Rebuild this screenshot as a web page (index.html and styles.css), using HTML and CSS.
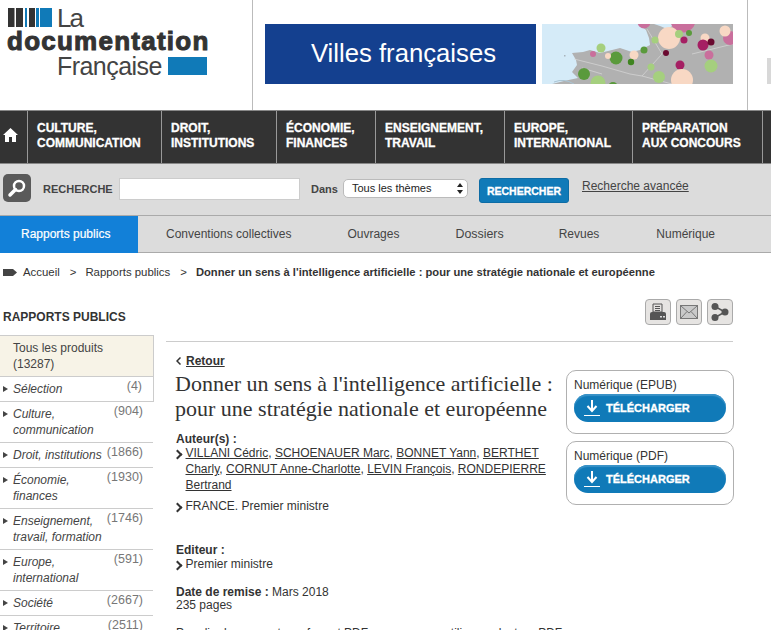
FILE: index.html
```html
<!DOCTYPE html>
<html lang="fr">
<head>
<meta charset="utf-8">
<title>Donner un sens à l'intelligence artificielle</title>
<link rel="stylesheet" href="styles.css">
</head>
<body>
<header class="top">
  <div class="logo">
    <div class="logo-row1">
      <svg class="logo-bars" width="44" height="19" viewBox="0 0 44 19"><rect x="0" width="6.500" height="19" fill="#333"/><rect x="8" width="7" height="19" fill="#333"/><rect x="17" width="2" height="19" fill="#107ab8"/><rect x="21" width="6" height="19" fill="#333"/><rect x="28" width="3" height="19" fill="#107ab8"/><rect x="32" width="12" height="19" fill="#107ab8"/></svg>
      <span class="logo-la">La</span>
    </div>
    <div class="logo-doc">documentation</div>
    <div class="logo-row3"><span class="logo-fr">Française</span><span class="logo-box"></span></div>
  </div>
  <div class="banner">
    <div class="banner-title">Villes françaises</div>
    <svg class="banner-map" width="191" height="60" viewBox="0 0 191 60">
      <rect width="191" height="60" fill="#d5ebf8"/>
      <path d="M97 0 L104 6 L107 14 L108 21 L98 26 L90 28 L78 24 L66 27 L58 29 L48 26 L41 28 L30 29 L34 36 L35 41 L30 48 L36 54 L22 57 L10 60 L191 60 L191 0 L134 0 L125 5 L118 2 L112 0Z" fill="#b1b1b1"/>
      <path d="M32 35 L60 42 L88 50 L100 52 L120 30 M100 52 L130 60 M40 44 L60 50 M150 30 L191 20 M105 5 L120 30" fill="none" stroke="#d8d8d8" stroke-width=".7"/>
      <path d="M12 58 Q22 54 32 60" fill="none" stroke="#a9c4d4"/>
      <rect x="22" y="31" width="1.500" height="1.500" fill="#a8b4bc"/>
      <circle cx="102" cy="-2" r="6.500" fill="#c96f9c"/>
      <circle cx="141" cy="-4" r="12.500" fill="#c96f9c"/>
      <circle cx="188" cy="14" r="7" fill="#c96f9c"/>
      <circle cx="127" cy="14" r="11" fill="#f8d8c4"/>
      <circle cx="137" cy="10" r="4" fill="#a5cf7e"/>
      <circle cx="147" cy="9" r="3" fill="#5a9a3c"/>
      <circle cx="142" cy="16" r="3.500" fill="#a51f63"/>
      <circle cx="113" cy="16" r="3.500" fill="#a5cf7e"/>
      <circle cx="163" cy="14" r="4.500" fill="#f8d8c4"/>
      <circle cx="183" cy="7" r="5.500" fill="#f8d8c4"/>
      <circle cx="161" cy="21" r="5.500" fill="#a51f63"/>
      <circle cx="169" cy="18" r="3.500" fill="#6a0a30"/>
      <circle cx="167" cy="31" r="4.500" fill="#c96f9c"/>
      <circle cx="169" cy="42" r="6.500" fill="#a5cf7e"/>
      <circle cx="124" cy="29" r="3" fill="#6a0a30"/>
      <circle cx="138" cy="41" r="4.500" fill="#a51f63"/>
      <circle cx="140" cy="56" r="11" fill="#f8d8c4"/>
      <circle cx="109" cy="43" r="3.500" fill="#a5cf7e"/>
      <circle cx="117" cy="53" r="6" fill="#a5cf7e"/>
      <circle cx="102" cy="26" r="3.500" fill="#5a9a3c"/>
      <circle cx="92" cy="31" r="4.500" fill="#f8d8c4"/>
      <circle cx="89" cy="38" r="3.200" fill="#3f8420"/>
      <circle cx="74" cy="34" r="6.500" fill="#5a9a3c"/>
      <circle cx="66" cy="32" r="3" fill="#f8d8c4"/>
      <circle cx="59" cy="24" r="4.500" fill="#a5cf7e"/>
      <circle cx="51" cy="30" r="3" fill="#c96f9c"/>
      <circle cx="42" cy="50" r="6" fill="#5a9a3c"/>
      <circle cx="56" cy="59" r="7.500" fill="#a5cf7e"/>
      <circle cx="71" cy="63" r="5" fill="#5a9a3c"/>
    </svg>
  </div>
  <div class="sliver"></div>
</header>

<nav class="mainnav">
  <a class="nav-home"><svg width="15" height="14" viewBox="0 0 15 14"><path d="M7.500 0 L15 7 L13 7 L13 14 L9 14 L9 9 L6 9 L6 14 L2 14 L2 7 L0 7Z" fill="#fff"/></svg></a>
  <a class="nav-item w1">CULTURE,<br>COMMUNICATION</a>
  <a class="nav-item w2">DROIT,<br>INSTITUTIONS</a>
  <a class="nav-item w3">ÉCONOMIE,<br>FINANCES</a>
  <a class="nav-item w4">ENSEIGNEMENT,<br>TRAVAIL</a>
  <a class="nav-item w5">EUROPE,<br>INTERNATIONAL</a>
  <a class="nav-item w6">PRÉPARATION<br>AUX CONCOURS</a>
</nav>

<div class="searchbar">
  <span class="search-icon"><svg width="20" height="20" viewBox="0 0 20 20"><circle cx="12" cy="8" r="5" fill="none" stroke="#fff" stroke-width="2.500"/><path d="M8.500 11.500 L3 17" stroke="#fff" stroke-width="3.500" stroke-linecap="round"/></svg></span>
  <span class="search-label">RECHERCHE</span>
  <span class="search-input"></span>
  <span class="search-dans">Dans</span>
  <span class="search-select">Tous les thèmes<svg width="6" height="11" viewBox="0 0 6 11"><path d="M3 0 L6 4 L0 4Z M3 11 L0 7 L6 7Z" fill="#222"/></svg></span>
  <span class="search-btn">RECHERCHER</span>
  <a class="search-adv">Recherche avancée</a>
</div>

<nav class="tabs">
  <a class="tab tab-on">Rapports publics</a>
  <a class="tab t2">Conventions collectives</a>
  <a class="tab t3">Ouvrages</a>
  <a class="tab t4">Dossiers</a>
  <a class="tab t5">Revues</a>
  <a class="tab t6">Numérique</a>
</nav>

<div class="crumbs">
  <svg width="14" height="7" viewBox="0 0 14 7"><path d="M0 0 H10 L14 3.500 L10 7 H0Z" fill="#444"/></svg>
  <span>Accueil</span><span class="sep">&gt;</span><span>Rapports publics</span><span class="sep">&gt;</span><b>Donner un sens à l'intelligence artificielle : pour une stratégie nationale et européenne</b>
</div>

<div class="page">
  <aside class="side">
    <h2 class="side-title">RAPPORTS PUBLICS</h2>
    <div class="side-all">Tous les produits<br>(13287)</div>
    <div class="cat cat-first"><i>Sélection</i><span>(4)</span></div>
    <div class="cat"><i>Culture, communication</i><span>(904)</span></div>
    <div class="cat"><i class="nw">Droit, institutions</i><span>(1866)</span></div>
    <div class="cat"><i>Économie, finances</i><span>(1930)</span></div>
    <div class="cat"><i>Enseignement, travail, formation</i><span>(1746)</span></div>
    <div class="cat"><i>Europe, international</i><span>(591)</span></div>
    <div class="cat"><i>Société</i><span>(2667)</span></div>
    <div class="cat"><i>Territoire</i><span>(2511)</span></div>
  </aside>

  <main class="main">
    <div class="tools">
      <span class="tool"><svg width="18" height="18" viewBox="0 0 18 18"><path d="M4 1 H13 V9 H4Z" fill="#e4e2e0" stroke="#555"/><path d="M6 3.500 H11 M6 5.500 H11 M6 7.500 H11" stroke="#555"/><path d="M1 11 Q1 9 3 9 H15 Q17 9 17 11 V17 H1Z" fill="#555"/><rect x="11" y="13" width="2" height="1.500" fill="#ddd"/><rect x="14" y="13" width="2" height="1.500" fill="#ddd"/></svg></span>
      <span class="tool"><svg width="18" height="14" viewBox="0 0 18 14"><rect x="0.500" y="0.500" width="17" height="13" fill="#c9c9c9" stroke="#777"/><path d="M1 1 L9 8 L17 1 M1 13 L7 6.500 M17 13 L11 6.500" fill="none" stroke="#777"/></svg></span>
      <span class="tool"><svg width="18" height="18" viewBox="0 0 18 18"><path d="M4 3.500 L14 9 L4 14.500" fill="none" stroke="#555" stroke-width="1.500"/><circle cx="4" cy="3.500" r="3.500" fill="#555"/><circle cx="14" cy="9" r="3.500" fill="#555"/><circle cx="4" cy="14.500" r="3.500" fill="#555"/></svg></span>
    </div>
    <div class="content">
      <div class="info">
        <a class="back"><svg class="chev" width="5" height="8" viewBox="0 0 5 8"><path d="M4.500 .5 L1 4 L4.500 7.500" fill="none" stroke="#333" stroke-width="1.500"/></svg><u>Retour</u></a>
        <h1 class="title">Donner un sens à l'intelligence artificielle :<br>pour une stratégie nationale et européenne</h1>
        <p class="label">Auteur(s) :</p>
        <div class="bullet"><u>VILLANI Cédric</u>, <u>SCHOENAUER Marc</u>, <u>BONNET Yann</u>, <u>BERTHET Charly</u>, <u>CORNUT Anne-Charlotte</u>, <u>LEVIN François</u>, <u>RONDEPIERRE Bertrand</u></div>
        <div class="bullet b-gap">FRANCE. Premier ministre</div>
        <p class="label l-ed">Editeur :</p>
        <div class="bullet">Premier ministre</div>
        <p class="meta"><b>Date de remise :</b> Mars 2018<br>235 pages</p>
        <p class="note">Pour lire les rapports au format PDF, vous pouvez utiliser un lecteur PDF</p>
      </div>
      <div class="downloads">
        <div class="dl"><div class="dl-name">Numérique (EPUB)</div><a class="dl-btn"><svg width="16" height="16" viewBox="0 0 16 16"><path d="M8 0 V10 M3.500 6 L8 11 L12.500 6" fill="none" stroke="#fff" stroke-width="2"/><path d="M0 15.500 H16" stroke="#fff"/></svg>TÉLÉCHARGER</a></div>
        <div class="dl"><div class="dl-name">Numérique (PDF)</div><a class="dl-btn"><svg width="16" height="16" viewBox="0 0 16 16"><path d="M8 0 V10 M3.500 6 L8 11 L12.500 6" fill="none" stroke="#fff" stroke-width="2"/><path d="M0 15.500 H16" stroke="#fff"/></svg>TÉLÉCHARGER</a></div>
      </div>
    </div>
  </main>
</div>
</body>
</html>
```

FILE: styles.css
```css
* { box-sizing: border-box; }
html, body { margin: 0; padding: 0; }
body {
  width: 771px;
  height: 630px;
  overflow: hidden;
  background: #fff;
  color: #333;
  font-family: "Liberation Sans", Arial, sans-serif;
  font-size: 12px;
}
.top { display: flex; height: 110px; }
.logo {
  width: 253px;
  flex: none;
  border-right: 1px solid #bbb;
  padding: 8px 0 0 7px;
}
.logo-row1 { display: flex; align-items: flex-start; gap: 5px; height: 20px; padding-left: 1px; }
.logo-la { font-size: 26px; line-height: 20px; letter-spacing: -2px; color: #444; }
.logo-doc {
  margin-top: -1px;
  font-size: 26px;
  line-height: 28px;
  font-weight: 700;
  color: #333;
  -webkit-text-stroke: 1px #333;
  letter-spacing: 1.25px;
  white-space: nowrap;
}
.logo-row3 { display: flex; align-items: center; gap: 6px; padding-left: 50px; height: 18px; margin-top: 2px; }
.logo-fr { font-size: 25px; line-height: 18px; letter-spacing: -.55px; color: #444; }
.logo-box { width: 39px; height: 18px; background: #107ab8; }
.banner {
  width: 495px;
  flex: none;
  border-right: 1px solid #bbb;
  display: flex;
  gap: 6px;
  padding: 24px 0 0 12px;
}
.banner-title {
  width: 271px;
  height: 60px;
  background: #14408f;
  color: #fff;
  font-size: 25.7px;
  line-height: 58px;
  text-align: center;
  padding-left: 6px;
}
.banner-map { display: block; }
.sliver { width: 4px; height: 26px; margin: 58px 0 0 19px; background: #d8d8d8; flex: none; }

.mainnav {
  display: flex;
  height: 54px;
  background: #333;
  border-top: 1px solid #888;
  border-bottom: 1px solid #888;
}
.nav-home { width: 28px; border-right: 1px solid #999; display: flex; align-items: center; justify-content: center; padding-right: 7px; padding-bottom: 5px; }
.nav-item {
  border-right: 1px solid #999;
  color: #fff;
  font-weight: 700;
  font-size: 12px;
  line-height: 15px;
  padding: 10px 0 0 9px;
  -webkit-text-stroke: .3px #fff;
  white-space: nowrap;
}
.w1 { width: 134px; }
.w2 { width: 115px; }
.w3 { width: 99px; }
.w4 { width: 129px; }
.w5 { width: 128px; }
.w6 { width: 130px; }

.searchbar {
  display: flex;
  align-items: flex-start;
  height: 51px;
  background: #dcdcdc;
}
.search-icon {
  width: 28px; height: 28px;
  margin: 10px 0 0 3px;
  background: #5a5a5a;
  border-radius: 5px;
  display: flex; align-items: center; justify-content: center;
}
.search-label { margin: 18px 0 0 12px; font-weight: 700; font-size: 11px; line-height: 14px; color: #444; width: 76px; }
.search-input { width: 181px; height: 22px; margin-top: 14px; background: #fff; border: 1px solid #ccc; }
.search-dans { margin: 18px 0 0 11px; font-weight: 700; font-size: 11px; line-height: 14px; color: #444; width: 32px; }
.search-select {
  width: 125px; height: 19px; margin-top: 15px;
  background: #fff; border: 1px solid #bbb; border-radius: 5px;
  font-size: 11px; line-height: 17px; color: #222;
  padding: 0 4px 0 8px;
  display: flex; justify-content: space-between; align-items: center;
}
.search-btn {
  width: 90px; height: 25px; margin: 14px 0 0 11px;
  background: #107ab8; border: 1px solid #0d6ca5; border-radius: 3px;
  color: #fff; font-weight: 700; font-size: 10.5px; line-height: 24px; text-align: center;
  -webkit-text-stroke: .3px #fff;
}
.search-adv { margin: 15px 0 0 13px; font-size: 12px; line-height: 14px; color: #444; text-decoration: underline; }

.tabs {
  display: flex;
  height: 38px;
  background: #dcdcdc;
  border-top: 1px solid #aaa;
  border-bottom: 1px solid #aaa;
}
.tab { font-size: 12px; line-height: 36px; color: #444; white-space: nowrap; }
.tab-on { width: 138px; background: #1280d8; color: #fff; -webkit-text-stroke: .2px #fff; margin-bottom: -1px; padding-left: 21px; }
.t2 { margin-left: 28px; }
.t3 { margin-left: 56px; }
.t4 { margin-left: 56px; font-size: 12.4px; }
.t5 { margin-left: 55px; }
.t6 { margin-left: 57px; }

.crumbs {
  display: flex;
  align-items: center;
  height: 14px;
  margin-top: 12px;
  padding-left: 3px;
  font-size: 11.4px;
  color: #333;
  white-space: nowrap;
}
.crumbs svg { margin-right: 6px; }
.crumbs .sep { margin: 0 9px 0 10px; }
.crumbs b { font-weight: 700; font-size: 11.2px; }

.page { display: flex; margin-top: 27px; }
.side { width: 154px; padding-top: 4px; }
.side-title { margin: 0 0 11px 3px; font-size: 12px; line-height: 14px; font-weight: 700; color: #333; }
.side-all {
  background: #f7f3e7;
  border: 1px solid #ccc;
  border-left: 0;
  padding: 4px 12px 4px 13px;
  font-size: 12px;
  line-height: 16px;
  height: 42px;
  color: #444;
}
.cat {
  display: flex;
  justify-content: space-between;
  align-items: flex-start;
  border-bottom: 1px solid #ccc;
  padding: 4px 10px 4px 13px;
  font-size: 12px;
  line-height: 16px;
  position: relative;
  width: 153px;
}
.cat::before {
  content: "";
  position: absolute;
  left: 3px; top: 9px;
  border-left: 5px solid #444;
  border-top: 3.5px solid transparent;
  border-bottom: 3.5px solid transparent;
}
.cat-first { border-right: 1px solid #ccc; width: 154px; padding-right: 11px; }
.cat i { width: 92px; color: #444; }
.cat i.nw { width: auto; white-space: nowrap; }
.cat span { color: #777; margin-top: -3px; white-space: nowrap; font-size: 12.5px; }

.main { width: 567px; margin-left: 12px; }
.tools { display: flex; justify-content: flex-end; gap: 5px; height: 26px; margin-top: -7px; }
.tool {
  width: 26px; height: 26px;
  background: #e6e4e2;
  border: 1px solid #aaa;
  border-radius: 4px;
  display: flex; align-items: center; justify-content: center;
}
.content {
  display: flex;
  border-top: 1px solid #ccc;
  margin-top: 16px;
  justify-content: space-between;
}
.info { width: 385px; padding: 12px 0 0 10px; }
.back { display: flex; align-items: center; gap: 5px; font-size: 12px; line-height: 14px; font-weight: 700; color: #333; }
.title {
  margin: 3px 0 0 -1px;
  font-family: "Liberation Serif", Georgia, serif;
  font-size: 22px;
  line-height: 25px;
  font-weight: 400;
  color: #333;
  white-space: nowrap;
}
.label { margin: 11px 0 0; font-size: 12px; line-height: 14px; font-weight: 700; color: #333; }
.l-ed { margin-top: 29px; }
.bullet { position: relative; padding-left: 9.5px; font-size: 12px; line-height: 16px; color: #333; margin-top: -1px; }
.bullet::before {
  content: "";
  position: absolute;
  left: -2px; top: 5.5px;
  width: 5px; height: 5px;
  border-top: 2px solid #333;
  border-right: 2px solid #333;
  transform: rotate(45deg);
}
.b-gap { margin-top: 5px; }
.meta { margin: 14px 0 0; font-size: 12px; line-height: 13px; color: #333; }
.note { margin: 14px 0 0; font-size: 12px; line-height: 14px; color: #333; white-space: nowrap; }
.downloads { width: 168px; margin-top: 28px; margin-right: -1px; display: flex; flex-direction: column; gap: 7px; }
.dl {
  height: 64px;
  border: 1px solid #b0b0b0;
  border-radius: 10px;
  padding: 7px 7px 0 7px;
}
.dl-name { font-size: 12px; line-height: 14px; color: #333; }
.dl-btn {
  display: flex; align-items: center; gap: 6px;
  height: 28px; margin-top: 2px;
  background: #107ab8;
  box-shadow: inset 0 2px 1px #3a93c8;
  border-radius: 14px;
  padding-left: 10px;
  color: #fff;
  font-weight: 700; font-size: 11px;
  -webkit-text-stroke: .3px #fff;
}
```
